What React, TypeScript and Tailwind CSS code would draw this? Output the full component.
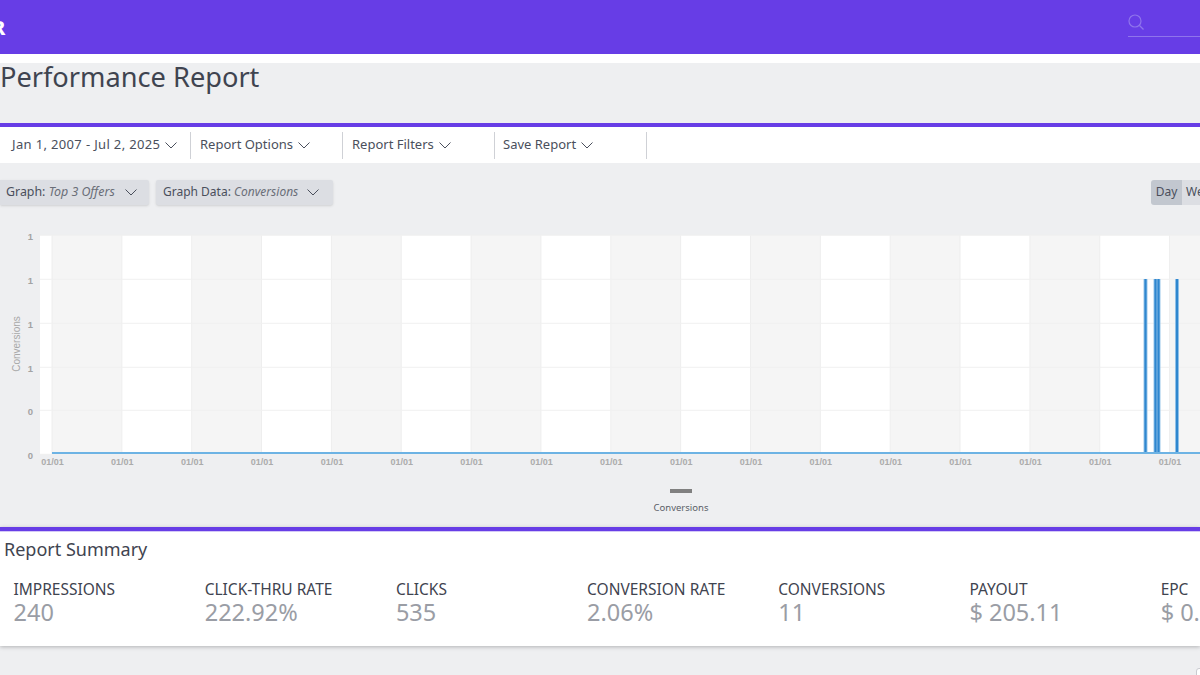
import React from "react";

const font = { fontFamily: '"Noto Sans", sans-serif' };
const ticks = Array.from({ length: 17 }, (_, i) => 52 + 69.85 * i);
const grid = [235, 279, 323, 367, 410, 454];
const yLabels = ["1", "1", "1", "1", "0", "0"];
const bars = [1145.5, 1155.5, 1158.5, 1177];

function Chevron({ size = 14 }: { size?: number }) {
  return (
    <svg width={size} height={size} viewBox="0 0 14 14" fill="none" stroke="currentColor" strokeWidth="1" className="shrink-0">
      <path d="M1.5 4.5 7 10l5.5-5.5" />
    </svg>
  );
}

function ToolItem({ label, width, pad, track = "" }: { label: string; width: string; pad: string; track?: string }) {
  return (
    <div className={`flex items-center gap-[4px] h-[27px] border-r border-[#cfd1d6] text-[13px] text-[#4a4f5c] ${width} ${pad}`}>
      <span className={`whitespace-nowrap ${track}`}>{label}</span>
      <Chevron />
    </div>
  );
}

function Stat({ label, value }: { label: string; value: string }) {
  return (
    <div className="w-[191.2px] shrink-0 pl-[13.5px] pt-[1px]">
      <div className="text-[15.5px] leading-[20px] text-[#3f4450] whitespace-nowrap">{label}</div>
      <div className="text-[23.5px] leading-[27px] text-[#9a9da5] whitespace-nowrap">{value}</div>
    </div>
  );
}

function Chart() {
  return (
    <svg width="1200" height="306" viewBox="0 210 1200 306" className="block shrink-0">
      <rect x="40" y="235" width="1160" height="219" fill="#ffffff" />
      {ticks.map((x, i) =>
        i % 2 === 0 ? <rect key={x} x={x} y="235" width={(ticks[i + 1] ?? 1200) - x} height="219" fill="#f5f5f5" /> : null
      )}
      {ticks.map((x) => (
        <line key={x} x1={x} x2={x} y1="235" y2="454" stroke="#eeeeee" />
      ))}
      {grid.map((y) => (
        <line key={y} x1="40" x2="1200" y1={y + 0.3} y2={y + 0.3} stroke="#f0f0f0" />
      ))}
      {grid.map((y, i) => (
        <text key={y} x="33" y={y + 4.7} textAnchor="end" fontSize="9.5" fill="#a3a3a3" fontFamily="Liberation Sans, sans-serif" fontWeight="700">
          {yLabels[i]}
        </text>
      ))}
      <text transform="translate(19.5 344) rotate(-90)" textAnchor="middle" fontSize="10" fill="#a8a8a8" fontFamily="Liberation Sans, sans-serif">
        Conversions
      </text>
      {ticks.map((x) => (
        <text key={x} x={x + 0.5} y="465" textAnchor="middle" fontSize="9" fontWeight="700" fill="#ababab" fontFamily="Liberation Sans, sans-serif">
          01/01
        </text>
      ))}
      {bars.map((x) => (
        <line key={x} x1={x} x2={x} y1="279" y2="453" stroke="#9cc8ea" strokeWidth="4" />
      ))}
      {bars.map((x) => (
        <line key={x} x1={x} x2={x} y1="279" y2="453" stroke="#2f87cf" strokeWidth="2.2" />
      ))}
      <line x1="52" x2="1200" y1="453" y2="453" stroke="#6db3e4" strokeWidth="2" />
      <rect x="670" y="489" width="22" height="4" fill="#808080" />
      <text x="681" y="511" textAnchor="middle" fontSize="9.5" fill="#5b5f68" style={font}>
        Conversions
      </text>
    </svg>
  );
}

export default function App() {
  return (
    <div className="w-[1200px] h-[675px] overflow-hidden bg-[#eeeff1] flex flex-col" style={font}>
      <header className="h-[54px] shrink-0 bg-[#673de6] flex items-center justify-between">
        <span className="text-white text-[20px] font-extrabold leading-none -ml-[8px] mt-[1px]">R</span>
        <div className="w-[72px] h-[37px] -mt-[17px] pb-[6px] border-b border-[#8f74ec] flex items-end text-[#8f74ec]">
          <svg width="16" height="16" viewBox="0 0 16 16" fill="none" stroke="currentColor" strokeWidth="1.2">
            <circle cx="7" cy="7" r="6" />
            <path d="m11.5 11.5 4 4" />
          </svg>
        </div>
      </header>
      <div className="h-[9px] shrink-0 bg-white" />
      <h1 className="h-[60px] shrink-0 text-[27.2px] leading-[28px] text-[#3f4450] font-normal whitespace-nowrap">Performance Report</h1>
      <div className="h-[4px] shrink-0 bg-[#673de6]" />
      <div className="h-[36px] shrink-0 bg-white flex items-center">
        <ToolItem label="Jan 1, 2007 - Jul 2, 2025" width="w-[191px]" pad="pl-[12px]" track="tracking-[0.35px]" />
        <ToolItem label="Report Options" width="w-[152px]" pad="pl-[9px]" />
        <ToolItem label="Report Filters" width="w-[152px]" pad="pl-[9px]" />
        <ToolItem label="Save Report" width="w-[152px]" pad="pl-[8px]" />
      </div>
      <div className="h-[17px] shrink-0" />
      <div className="h-[25px] shrink-0 flex items-center relative">
        <div className="w-[149px] h-[25px] bg-[#dcdee3] rounded-r-[2px] flex items-center pl-[6px] pb-[1px] gap-[9px] text-[12.4px] text-[#4a4f5c] shadow-sm whitespace-nowrap">
          <span>Graph: <i className="text-[#6a6e78]">Top 3 Offers</i></span>
          <Chevron />
        </div>
        <div className="w-[177px] h-[25px] ml-[7px] bg-[#dcdee3] rounded-[2px] flex items-center pl-[7px] pb-[1px] gap-[8px] text-[12px] text-[#4a4f5c] shadow-sm whitespace-nowrap">
          <span>Graph Data: <i className="text-[#6a6e78]">Conversions</i></span>
          <Chevron />
        </div>
        <div className="ml-auto flex h-[25px] text-[12px] text-[#4a4f5c]">
          <div className="w-[31px] bg-[#c2c7cf] rounded-l-[3px] flex items-center justify-center pb-[2px]">Day</div>
          <div className="w-[18px] bg-[#dcdee3] pl-[4px] pb-[2px] flex items-center overflow-hidden whitespace-nowrap">Week</div>
        </div>
      </div>
      <div className="h-[5px] shrink-0" />
      <Chart />
      <div className="h-[11px] shrink-0" />
      <section className="h-[119px] shrink-0 bg-white border-t-[4px] border-[#673de6] shadow-[inset_0_1px_0_#d4c8f7,0_1px_4px_rgba(0,0,0,0.25)]">
        <div className="text-[18px] leading-[24px] pl-[4px] pt-[6px] text-[#3f4450]">Report Summary</div>
        <div className="flex mt-[17px] w-[1400px]">
          <Stat label="IMPRESSIONS" value="240" />
          <Stat label="CLICK-THRU RATE" value="222.92%" />
          <Stat label="CLICKS" value="535" />
          <Stat label="CONVERSION RATE" value="2.06%" />
          <Stat label="CONVERSIONS" value="11" />
          <Stat label="PAYOUT" value="$ 205.11" />
          <Stat label="EPC" value="$ 0.38" />
        </div>
      </section>
      <div className="mt-[22px] ml-[1196px] w-[20px] h-[20px] shrink-0 bg-white border border-[#c9cbd0] rounded-[3px]" />
    </div>
  );
}
